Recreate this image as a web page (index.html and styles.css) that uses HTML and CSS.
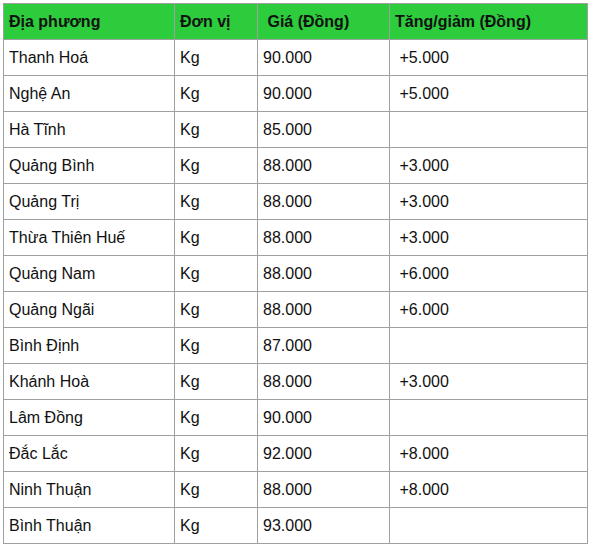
FILE: index.html
```html
<!DOCTYPE html>
<html lang="vi">
<head>
<meta charset="utf-8">
<link rel="stylesheet" href="styles.css">
</head>
<body>
<table class="price-table">
  <colgroup>
    <col class="c1"><col class="c2"><col class="c3"><col class="c4">
  </colgroup>
  <thead>
    <tr><th>Địa phương</th><th>Đơn vị</th><th>&nbsp;Giá (Đồng)</th><th>Tăng/giảm (Đồng)</th></tr>
  </thead>
  <tbody>
    <tr><td>Thanh Hoá</td><td>Kg</td><td>90.000</td><td>&nbsp;+5.000</td></tr>
    <tr><td>Nghệ An</td><td>Kg</td><td>90.000</td><td>&nbsp;+5.000</td></tr>
    <tr><td>Hà Tĩnh</td><td>Kg</td><td>85.000</td><td></td></tr>
    <tr><td>Quảng Bình</td><td>Kg</td><td>88.000</td><td>&nbsp;+3.000</td></tr>
    <tr><td>Quảng Trị</td><td>Kg</td><td>88.000</td><td>&nbsp;+3.000</td></tr>
    <tr><td>Thừa Thiên Huế</td><td>Kg</td><td>88.000</td><td>&nbsp;+3.000</td></tr>
    <tr><td>Quảng Nam</td><td>Kg</td><td>88.000</td><td>&nbsp;+6.000</td></tr>
    <tr><td>Quảng Ngãi</td><td>Kg</td><td>88.000</td><td>&nbsp;+6.000</td></tr>
    <tr><td>Bình Định</td><td>Kg</td><td>87.000</td><td></td></tr>
    <tr><td>Khánh Hoà</td><td>Kg</td><td>88.000</td><td>&nbsp;+3.000</td></tr>
    <tr><td>Lâm Đồng</td><td>Kg</td><td>90.000</td><td></td></tr>
    <tr><td>Đắc Lắc</td><td>Kg</td><td>92.000</td><td>&nbsp;+8.000</td></tr>
    <tr><td>Ninh Thuận</td><td>Kg</td><td>88.000</td><td>&nbsp;+8.000</td></tr>
    <tr><td>Bình Thuận</td><td>Kg</td><td>93.000</td><td></td></tr>
  </tbody>
</table>
</body>
</html>
```

FILE: styles.css
```css
html, body {
  margin: 0;
  padding: 0;
  background: #ffffff;
}
body {
  padding: 3px;
  font-family: "Liberation Sans", Arial, sans-serif;
  font-size: 16px;
  color: #000;
}
.price-table {
  border-collapse: collapse;
  table-layout: fixed;
  width: 584px;
}
.c1 { width: 171px; }
.c2 { width: 83px; }
.c3 { width: 132px; }
.c4 { width: 198px; }
.price-table th,
.price-table td {
  border: 1px solid #a0a0a0;
  height: 36px;
  padding: 0 5px;
  box-sizing: border-box;
  text-align: left;
  vertical-align: middle;
  white-space: nowrap;
  overflow: hidden;
}
.price-table th {
  background: #2ccc3c;
  font-weight: bold;
  color: #111;
}
.price-table td {
  color: #111;
}
```
